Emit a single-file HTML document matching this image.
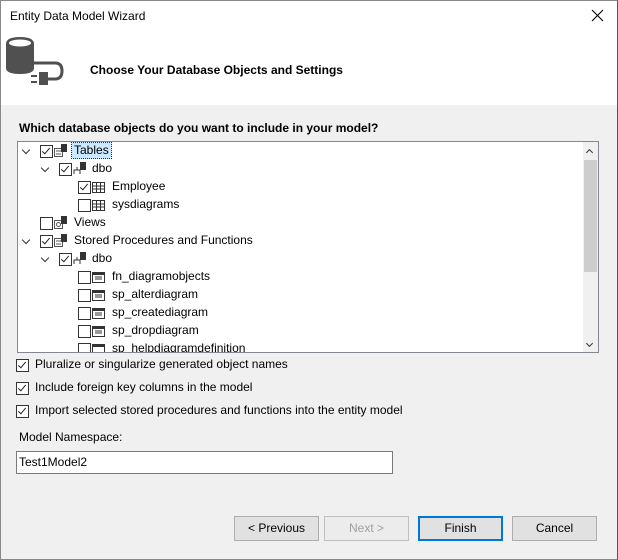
<!DOCTYPE html>
<html><head><style>
body{margin:0;width:618px;height:560px;overflow:hidden;font-family:"Liberation Sans",sans-serif;font-size:12px;color:#000;}
.win{position:absolute;left:0;top:0;width:616px;height:558px;border:1px solid #888;border-right-color:#555;background:#f0f0f0;}
.hdr{position:absolute;left:0;top:0;width:616px;height:104px;background:#fff;}
.abs{position:absolute;white-space:nowrap;}
.cb{position:absolute;width:11px;height:11px;border:1px solid #333;background:#fff;}
.cb.c::after{content:"";position:absolute;left:3px;top:0px;width:3px;height:7px;border:solid #222;border-width:0 1.3px 1.3px 0;transform:rotate(40deg);}
.chev{position:absolute;width:5px;height:5px;border:solid #333;border-width:0 1.3px 1.3px 0;transform:rotate(45deg);}
.ico{position:absolute;width:14px;height:13px;}
.btn{position:absolute;top:515px;width:83px;height:23px;border:1px solid #adadad;background:#e1e1e1;text-align:center;line-height:23px;}
</style></head><body>
<div class="win">
<div class="hdr">
<div class="abs" style="left:9px;top:8px;">Entity Data Model Wizard</div>
<svg class="abs" style="left:590px;top:8px" width="13" height="13"><path d="M1 1L12 12M12 1L1 12" stroke="#000" stroke-width="1.1"/></svg>
<svg class="abs" style="left:0;top:30px" width="70" height="60">
<path d="M5 13 Q5 6 19 6 Q33 6 33 13 V37 Q33 43 19 43 Q5 43 5 37Z" fill="#505050"/>
<ellipse cx="19" cy="12" rx="11" ry="3.5" fill="#fff"/>
<path d="M33 32 H54 Q61 32 61 40 Q61 48 54 48 H47" fill="none" stroke="#505050" stroke-width="3"/>
<rect x="38" y="41" width="9" height="13" fill="#505050"/>
<rect x="30" y="44" width="6" height="2" fill="#505050"/><rect x="30" y="50" width="6" height="2" fill="#505050"/>
</svg>
<div class="abs" style="left:89px;top:62px;font-weight:bold;">Choose Your Database Objects and Settings</div>
</div>
<div class="abs" style="left:18px;top:120px;font-weight:bold;">Which database objects do you want to include in your model?</div>
<div class="abs" style="left:16px;top:140px;width:580px;height:210px;border:1px solid #828790;background:#fff;overflow:hidden;">
 <div class="abs" style="left:565px;top:0;width:15px;height:210px;background:#f0f0f0;"></div>
 <div class="abs" style="left:566px;top:18px;width:13px;height:112px;background:#cdcdcd;"></div>
 <div class="chev" style="left:569px;top:8px;transform:rotate(-135deg);width:4px;height:4px;"></div>
 <div class="chev" style="left:569px;top:199px;width:4px;height:4px;"></div>
 <div class="chev" style="left:5px;top:5px"></div>
 <div class="cb c" style="left:22px;top:3px"></div>
 <svg class="ico" style="left:36px;top:2px" width="14" height="13"><rect x=".5" y="4.5" width="8" height="8" fill="none" stroke="#555"/><path d="M2 7H7M2 10H7" stroke="#555"/><rect x="7" y="0" width="6" height="8" fill="#333"/></svg>
 <div class="abs" style="left:53px;top:0px;background:#cce8ff;border:1px dotted #333;padding:0 2px;height:15px;line-height:15px;">Tables</div>
 <div class="chev" style="left:24px;top:23px"></div>
 <div class="cb c" style="left:41px;top:21px"></div>
 <svg class="ico" style="left:55px;top:20px" width="14" height="13"><path d="M1 12V8H7V12M4 8V5" stroke="#333" fill="none"/><rect x="7" y="0" width="6" height="8" fill="#333"/></svg>
 <div class="abs" style="left:74px;top:19px;">dbo</div>
 <div class="cb c" style="left:60px;top:39px"></div>
 <svg class="ico" style="left:74px;top:40px" width="13" height="11"><rect x=".5" y=".5" width="12" height="10" fill="none" stroke="#333"/><path d="M1 4H12M1 7H12M4.5 1V10M8.5 1V10" stroke="#333"/></svg>
 <div class="abs" style="left:94px;top:37px;">Employee</div>
 <div class="cb" style="left:60px;top:57px"></div>
 <svg class="ico" style="left:74px;top:58px" width="13" height="11"><rect x=".5" y=".5" width="12" height="10" fill="none" stroke="#333"/><path d="M1 4H12M1 7H12M4.5 1V10M8.5 1V10" stroke="#333"/></svg>
 <div class="abs" style="left:94px;top:55px;">sysdiagrams</div>
 <div class="cb" style="left:22px;top:75px"></div>
 <svg class="ico" style="left:36px;top:74px" width="14" height="13"><rect x=".5" y="4.5" width="8" height="8" fill="none" stroke="#555"/><circle cx="4.5" cy="8.5" r="2" fill="none" stroke="#555"/><rect x="7" y="0" width="6" height="8" fill="#333"/></svg>
 <div class="abs" style="left:56px;top:73px;">Views</div>
 <div class="chev" style="left:5px;top:95px"></div>
 <div class="cb c" style="left:22px;top:93px"></div>
 <svg class="ico" style="left:36px;top:92px" width="14" height="13"><rect x=".5" y="4.5" width="8" height="8" fill="none" stroke="#555"/><path d="M2 7H7M2 10H7" stroke="#555"/><rect x="7" y="0" width="6" height="8" fill="#333"/></svg>
 <div class="abs" style="left:56px;top:91px;">Stored Procedures and Functions</div>
 <div class="chev" style="left:24px;top:113px"></div>
 <div class="cb c" style="left:41px;top:111px"></div>
 <svg class="ico" style="left:55px;top:110px" width="14" height="13"><path d="M1 12V8H7V12M4 8V5" stroke="#333" fill="none"/><rect x="7" y="0" width="6" height="8" fill="#333"/></svg>
 <div class="abs" style="left:74px;top:109px;">dbo</div>
 <div class="cb" style="left:60px;top:129px"></div><svg class="ico" style="left:74px;top:130px" width="13" height="11"><rect x=".5" y=".5" width="12" height="10" fill="none" stroke="#333"/><rect x="1" y="1" width="11" height="2" fill="#333"/><path d="M3 5H10M3 7H10" stroke="#333"/></svg>
 <div class="abs" style="left:94px;top:127px;">fn_diagramobjects</div>
 <div class="cb" style="left:60px;top:147px"></div><svg class="ico" style="left:74px;top:148px" width="13" height="11"><rect x=".5" y=".5" width="12" height="10" fill="none" stroke="#333"/><rect x="1" y="1" width="11" height="2" fill="#333"/><path d="M3 5H10M3 7H10" stroke="#333"/></svg>
 <div class="abs" style="left:94px;top:145px;">sp_alterdiagram</div>
 <div class="cb" style="left:60px;top:165px"></div><svg class="ico" style="left:74px;top:166px" width="13" height="11"><rect x=".5" y=".5" width="12" height="10" fill="none" stroke="#333"/><rect x="1" y="1" width="11" height="2" fill="#333"/><path d="M3 5H10M3 7H10" stroke="#333"/></svg>
 <div class="abs" style="left:94px;top:163px;">sp_creatediagram</div>
 <div class="cb" style="left:60px;top:183px"></div><svg class="ico" style="left:74px;top:184px" width="13" height="11"><rect x=".5" y=".5" width="12" height="10" fill="none" stroke="#333"/><rect x="1" y="1" width="11" height="2" fill="#333"/><path d="M3 5H10M3 7H10" stroke="#333"/></svg>
 <div class="abs" style="left:94px;top:181px;">sp_dropdiagram</div>
 <div class="cb" style="left:60px;top:201px"></div><svg class="ico" style="left:74px;top:202px" width="13" height="11"><rect x=".5" y=".5" width="12" height="10" fill="none" stroke="#333"/><rect x="1" y="1" width="11" height="2" fill="#333"/></svg>
 <div class="abs" style="left:94px;top:199px;">sp_helpdiagramdefinition</div>
</div>
<div class="cb c" style="left:15px;top:358px"></div><div class="abs" style="left:34px;top:356px;">Pluralize or singularize generated object names</div>
<div class="cb c" style="left:15px;top:381px"></div><div class="abs" style="left:34px;top:379px;">Include foreign key columns in the model</div>
<div class="cb c" style="left:15px;top:404px"></div><div class="abs" style="left:34px;top:402px;">Import selected stored procedures and functions into the entity model</div>
<div class="abs" style="left:18px;top:429px;">Model Namespace:</div>
<div class="abs" style="left:15px;top:450px;width:373px;height:21px;border:1px solid #7a7a7a;background:#fff;line-height:21px;padding-left:2px;">Test1Model2</div>
<div class="btn" style="left:233px;">&lt; Previous</div>
<div class="btn" style="left:323px;color:#a0a0a0;border-color:#bfbfbf;background:#ececec;">Next &gt;</div>
<div class="btn" style="left:417px;border:2px solid #0078d7;width:81px;height:21px;line-height:21px;">Finish</div>
<div class="btn" style="left:511px;">Cancel</div>
</div>
</body></html>
